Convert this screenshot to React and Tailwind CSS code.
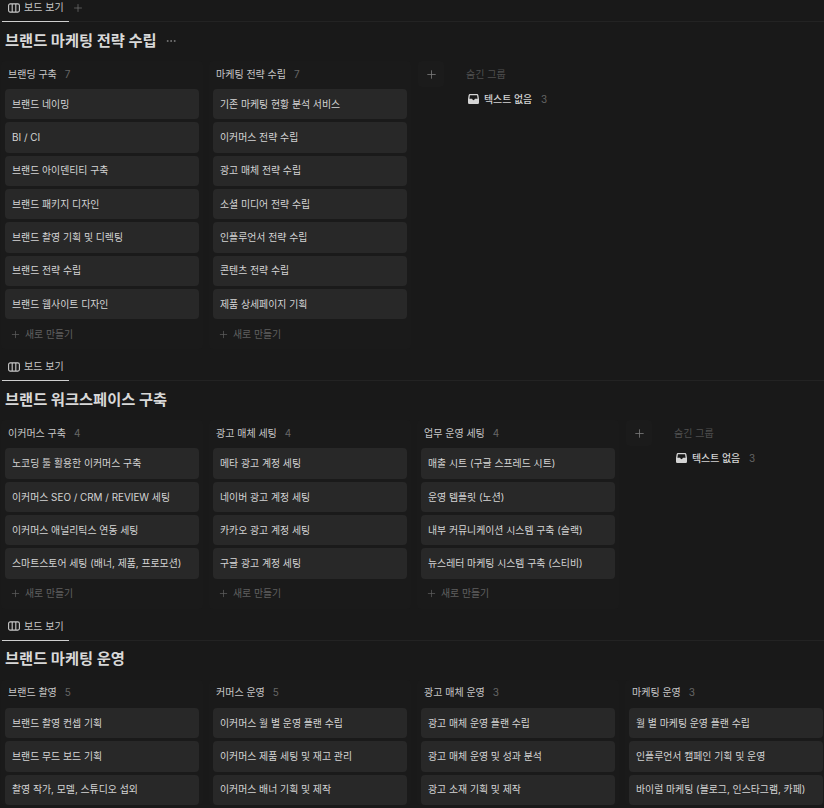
import { Plus, Ellipsis } from "lucide-react"

const 섹션들 = [
    {
        title: "브랜드 마케팅 전략 수립",
        more: true,
        addTab: true,
        groups: [
            { name: "브랜딩 구축", items: ["브랜드 네이밍", "BI / CI", "브랜드 아이덴티티 구축", "브랜드 패키지 디자인", "브랜드 촬영 기획 및 디렉팅", "브랜드 전략 수립", "브랜드 웹사이트 디자인"] },
            { name: "마케팅 전략 수립", items: ["기존 마케팅 현황 분석 서비스", "이커머스 전략 수립", "광고 매체 전략 수립", "소셜 미디어 전략 수립", "인플루언서 전략 수립", "콘텐츠 전략 수립", "제품 상세페이지 기획"] },
        ],
        hidden: true,
        footer: true,
    },
    {
        title: "브랜드 워크스페이스 구축",
        groups: [
            { name: "이커머스 구축", items: ["노코딩 툴 활용한 이커머스 구축", "이커머스 SEO / CRM / REVIEW 세팅", "이커머스 애널리틱스 연동 세팅", "스마트스토어 세팅 (배너, 제품, 프로모션)"] },
            { name: "광고 매체 세팅", items: ["메타 광고 계정 세팅", "네이버 광고 계정 세팅", "카카오 광고 계정 세팅", "구글 광고 계정 세팅"] },
            { name: "업무 운영 세팅", items: ["매출 시트 (구글 스프레드 시트)", "운영 템플릿 (노션)", "내부 커뮤니케이션 시스템 구축 (슬랙)", "뉴스레터 마케팅 시스템 구축 (스티비)"] },
        ],
        hidden: true,
        footer: true,
    },
    {
        title: "브랜드 마케팅 운영",
        groups: [
            { name: "브랜드 촬영", count: 5, items: ["브랜드 촬영 컨셉 기획", "브랜드 무드 보드 기획", "촬영 작가, 모델, 스튜디오 섭외"] },
            { name: "커머스 운영", count: 5, items: ["이커머스 월 별 운영 플랜 수립", "이커머스 제품 세팅 및 재고 관리", "이커머스 배너 기획 및 제작"] },
            { name: "광고 매체 운영", count: 3, items: ["광고 매체 운영 플랜 수립", "광고 매체 운영 및 성과 분석", "광고 소재 기획 및 제작"] },
            { name: "마케팅 운영", count: 3, items: ["월 별 마케팅 운영 플랜 수립", "인플루언서 캠페인 기획 및 운영", "바이럴 마케팅 (블로그, 인스타그램, 카페)"] },
        ],
    },
]

const 보드아이콘 = () => (
    <svg width="12" height="10" viewBox="0 0 12 10" fill="none" stroke="currentColor" strokeWidth="1.1" className="shrink-0">
        <rect x="0.6" y="0.9" width="10.8" height="8.2" rx="1.6" />
        <path d="M4.2 1v8M7.8 1v8" />
    </svg>
)

const 받은함아이콘 = () => (
    <svg width="11" height="10" viewBox="0 0 11 10" className="shrink-0" fill="currentColor">
        <path fillRule="evenodd" d="M2.2 0h6.6c.8 0 1.4.5 1.6 1.2L11 5v3.4c0 .9-.7 1.6-1.6 1.6H1.6C.7 10 0 9.3 0 8.4V5l.6-3.8C.8.5 1.4 0 2.2 0Zm.1 1.3c-.2 0-.4.1-.4.3L1.4 4.8h2.4c.2 0 .4.1.4.3.2.7.7 1.1 1.3 1.1s1.1-.4 1.3-1.1c0-.2.2-.3.4-.3h2.4l-.5-3.2c0-.2-.2-.3-.4-.3H2.3Z" />
    </svg>
)

const 그룹 = ({ group, footer }) => (
    <div className="w-[202px] shrink-0 rounded bg-[#1a1a1a] px-[4px]">
        <div className="flex h-[28px] items-center gap-[8px] pb-[2px] pl-[3px] text-[10px] text-[#c8c8c8]">
            <span>{group.name}</span>
            <span className="text-[#666666]">{group.count ?? group.items.length}</span>
        </div>
        <div className="flex flex-col gap-[3px]">
            {group.items.map((item) => (
                <div key={item} className="flex h-[30.33px] w-[193.5px] items-center whitespace-nowrap rounded bg-[#282828] pl-[7px] text-[9.9px] text-[#d4d4d4]">
                    {item}
                </div>
            ))}
        </div>
        {footer && (
            <div className="flex h-[30px] items-center gap-[4px] pl-[5px] text-[9.9px] text-[#606060]">
                <Plus size={11} strokeWidth={1.5} />
                <span>새로 만들기</span>
            </div>
        )}
    </div>
)

const 숨긴그룹 = () => (
    <>
        <div className="ml-[1px] flex h-[26px] w-[26px] shrink-0 items-center justify-center rounded bg-[#1b1b1b] text-[#7a7a7a]">
            <Plus size={13} strokeWidth={1.5} />
        </div>
        <div className="ml-[15px] w-[120px] shrink-0">
            <div className="flex h-[28px] items-center pb-[2px] pl-[1px] text-[10px] text-[#505050]">숨긴 그룹</div>
            <div className="flex h-[20px] items-center gap-[5px] pl-[3px] text-[9.9px] font-medium text-[#d4d4d4]">
                <받은함아이콘 />
                <span>텍스트 없음</span>
                <span className="ml-[4px] font-normal text-[#666666]">3</span>
            </div>
        </div>
    </>
)

const 섹션 = ({ section }) => (
    <div>
        <div className="flex h-[22px] items-center border-b border-[#232323]">
            <div className="relative ml-[2px] flex h-full w-[67px] items-center gap-[4px] pb-[6px] pl-[6px] text-[10px] text-[#c8c8c8]">
                <보드아이콘 />
                <span>보드 보기</span>
                <div className="absolute bottom-[-1px] left-0 h-[1px] w-full bg-[#cfcfcf]" />
            </div>
            {section.addTab && <Plus size={12} strokeWidth={1.5} className="mb-[6px] ml-[3px] text-[#6e6e6e]" />}
        </div>
        <div className="flex h-[39px] items-center gap-[8px] pb-[1px] pl-[5px] text-[15.3px] font-bold text-[#d8d8d8]">
            <span>{section.title}</span>
            {section.more && <Ellipsis size={12} className="text-[#7a7a7a]" />}
        </div>
        <div className="flex gap-[6px] pl-[1px]">
            {section.groups.map((group) => (
                <그룹 key={group.name} group={group} footer={section.footer} />
            ))}
            {section.hidden && <숨긴그룹 />}
        </div>
    </div>
)

export default function App() {
    return (
        <div className="h-[808px] w-[824px] overflow-hidden bg-[#191919] font-['Inter','Noto_Sans_CJK_KR',sans-serif]">
            <div className="flex flex-col gap-[10.17px]">
                {섹션들.map((section) => (
                    <섹션 key={section.title} section={section} />
                ))}
            </div>
        </div>
    )
}
